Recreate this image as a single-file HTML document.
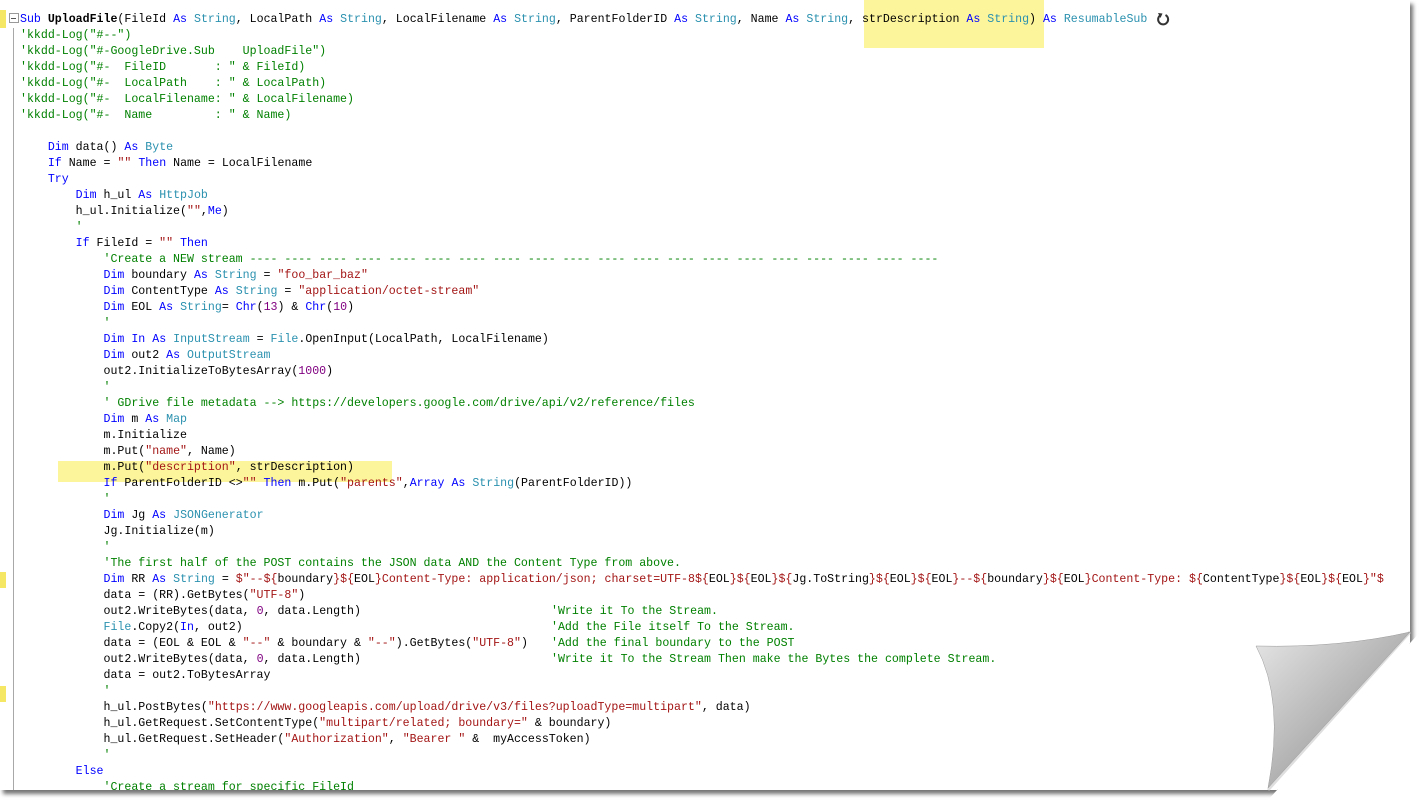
<!DOCTYPE html>
<html><head><meta charset="utf-8"><style>
html,body{margin:0;padding:0;background:#fff;width:1425px;height:803px;overflow:hidden}
#page{position:absolute;left:0;top:0;width:1410px;height:790px;background:#fff;box-shadow:3px 4px 4px rgba(0,0,0,.55);overflow:hidden;
clip-path:polygon(0 0,1420px 0,1420px 632px,1268px 800px,0 800px)}
#code{position:absolute;left:0;top:1px;width:1410px;height:800px}
.l{position:absolute;left:20px;height:16px;line-height:16px;white-space:pre;font-family:"Liberation Mono",monospace;font-size:11.6px;color:#000}
.k{color:#0000ff}.t{color:#2b91af}.c{color:#008000}.s{color:#a31515}.n{color:#800080}.b{font-weight:bold}
.cm{position:absolute;left:551px;color:#008000}
.hl{position:absolute;background:#fdf59c}
.mk{position:absolute;left:0;width:6px;background:#f5e663}
</style></head><body>
<div id="page">
<div class="hl" style="left:864px;top:0;width:180px;height:48px"></div>
<div class="hl" style="left:58px;top:461px;width:334px;height:21px"></div>
<div class="mk" style="top:10px;height:18px"></div>
<div class="mk" style="top:572px;height:16px"></div>
<div class="mk" style="top:686px;height:16px"></div>
<div style="position:absolute;left:13px;top:28px;width:1px;height:770px;background:#a8a8a8"></div>
<div style="position:absolute;left:9px;top:13px;width:8px;height:8px;border:1px solid #999;background:#fff"></div>
<div style="position:absolute;left:11px;top:18px;width:5px;height:1px;background:#555"></div>
<svg style="position:absolute;left:1156px;top:12px" width="14" height="14" viewBox="0 0 14 14"><path d="M4 3.5 A5 5 0 1 0 9.5 3" fill="none" stroke="#333" stroke-width="2"/><path d="M2 1 L6.5 1.5 L4.5 6 Z" fill="#333"/></svg>
<div id="code">
<div class="l" style="top:11px"><span class="k">Sub</span> <span class="b">UploadFile</span>(FileId <span class="k">As</span> <span class="t">String</span>, LocalPath <span class="k">As</span> <span class="t">String</span>, LocalFilename <span class="k">As</span> <span class="t">String</span>, ParentFolderID <span class="k">As</span> <span class="t">String</span>, Name <span class="k">As</span> <span class="t">String</span>, strDescription <span class="k">As</span> <span class="t">String</span>) <span class="k">As</span> <span class="t">ResumableSub</span></div>
<div class="l c" style="top:27px">'kkdd-Log("#--")</div>
<div class="l c" style="top:43px">'kkdd-Log("#-GoogleDrive.Sub    UploadFile")</div>
<div class="l c" style="top:59px">'kkdd-Log("#-  FileID       : " &amp; FileId)</div>
<div class="l c" style="top:75px">'kkdd-Log("#-  LocalPath    : " &amp; LocalPath)</div>
<div class="l c" style="top:91px">'kkdd-Log("#-  LocalFilename: " &amp; LocalFilename)</div>
<div class="l c" style="top:107px">'kkdd-Log("#-  Name         : " &amp; Name)</div>
<div class="l" style="top:139px">    <span class="k">Dim</span> data() <span class="k">As</span> <span class="t">Byte</span></div>
<div class="l" style="top:155px">    <span class="k">If</span> Name = <span class="s">""</span> <span class="k">Then</span> Name = LocalFilename</div>
<div class="l" style="top:171px">    <span class="k">Try</span></div>
<div class="l" style="top:187px">        <span class="k">Dim</span> h_ul <span class="k">As</span> <span class="t">HttpJob</span></div>
<div class="l" style="top:203px">        h_ul.Initialize(<span class="s">""</span>,<span class="k">Me</span>)</div>
<div class="l c" style="top:219px">        '</div>
<div class="l" style="top:235px">        <span class="k">If</span> FileId = <span class="s">""</span> <span class="k">Then</span></div>
<div class="l c" style="top:251px">            'Create a NEW stream ---- ---- ---- ---- ---- ---- ---- ---- ---- ---- ---- ---- ---- ---- ---- ---- ---- ---- ---- ----</div>
<div class="l" style="top:267px">            <span class="k">Dim</span> boundary <span class="k">As</span> <span class="t">String</span> = <span class="s">"foo_bar_baz"</span></div>
<div class="l" style="top:283px">            <span class="k">Dim</span> ContentType <span class="k">As</span> <span class="t">String</span> = <span class="s">"application/octet-stream"</span></div>
<div class="l" style="top:299px">            <span class="k">Dim</span> EOL <span class="k">As</span> <span class="t">String</span>= <span class="k">Chr</span>(<span class="n">13</span>) &amp; <span class="k">Chr</span>(<span class="n">10</span>)</div>
<div class="l c" style="top:315px">            '</div>
<div class="l" style="top:331px">            <span class="k">Dim</span> <span class="k">In</span> <span class="k">As</span> <span class="t">InputStream</span> = <span class="t">File</span>.OpenInput(LocalPath, LocalFilename)</div>
<div class="l" style="top:347px">            <span class="k">Dim</span> out2 <span class="k">As</span> <span class="t">OutputStream</span></div>
<div class="l" style="top:363px">            out2.InitializeToBytesArray(<span class="n">1000</span>)</div>
<div class="l c" style="top:379px">            '</div>
<div class="l c" style="top:395px">            ' GDrive file metadata --&gt; https://developers.google.com/drive/api/v2/reference/files</div>
<div class="l" style="top:411px">            <span class="k">Dim</span> m <span class="k">As</span> <span class="t">Map</span></div>
<div class="l" style="top:427px">            m.Initialize</div>
<div class="l" style="top:443px">            m.Put(<span class="s">"name"</span>, Name)</div>
<div class="l" style="top:459px">            m.Put(<span class="s">"description"</span>, strDescription)</div>
<div class="l" style="top:475px">            <span class="k">If</span> ParentFolderID &lt;&gt;<span class="s">""</span> <span class="k">Then</span> m.Put(<span class="s">"parents"</span>,<span class="k">Array</span> <span class="k">As</span> <span class="t">String</span>(ParentFolderID))</div>
<div class="l c" style="top:491px">            '</div>
<div class="l" style="top:507px">            <span class="k">Dim</span> Jg <span class="k">As</span> <span class="t">JSONGenerator</span></div>
<div class="l" style="top:523px">            Jg.Initialize(m)</div>
<div class="l c" style="top:539px">            '</div>
<div class="l c" style="top:555px">            'The first half of the POST contains the JSON data AND the Content Type from above.</div>
<div class="l" style="top:571px">            <span class="k">Dim</span> RR <span class="k">As</span> <span class="t">String</span> = <span class="s">$"--${</span>boundary<span class="s">}${</span>EOL<span class="s">}Content-Type: application/json; charset=UTF-8${</span>EOL<span class="s">}${</span>EOL<span class="s">}${</span>Jg.ToString<span class="s">}${</span>EOL<span class="s">}${</span>EOL<span class="s">}--${</span>boundary<span class="s">}${</span>EOL<span class="s">}Content-Type: ${</span>ContentType<span class="s">}${</span>EOL<span class="s">}${</span>EOL<span class="s">}"$</span></div>
<div class="l" style="top:587px">            data = (RR).GetBytes(<span class="s">"UTF-8"</span>)</div>
<div class="l" style="top:603px;width:1300px">            out2.WriteBytes(data, <span class="n">0</span>, data.Length)<span class="cm" style="left:531px">'Write it To the Stream.</span></div>
<div class="l" style="top:619px;width:1300px">            <span class="t">File</span>.Copy2(<span class="k">In</span>, out2)<span class="cm" style="left:531px">'Add the File itself To the Stream.</span></div>
<div class="l" style="top:635px;width:1300px">            data = (EOL &amp; EOL &amp; <span class="s">"--"</span> &amp; boundary &amp; <span class="s">"--"</span>).GetBytes(<span class="s">"UTF-8"</span>)<span class="cm" style="left:531px">'Add the final boundary to the POST</span></div>
<div class="l" style="top:651px;width:1300px">            out2.WriteBytes(data, <span class="n">0</span>, data.Length)<span class="cm" style="left:531px">'Write it To the Stream Then make the Bytes the complete Stream.</span></div>
<div class="l" style="top:667px">            data = out2.ToBytesArray</div>
<div class="l c" style="top:683px">            '</div>
<div class="l" style="top:699px">            h_ul.PostBytes(<span class="s">"https://www.googleapis.com/upload/drive/v3/files?uploadType=multipart"</span>, data)</div>
<div class="l" style="top:715px">            h_ul.GetRequest.SetContentType(<span class="s">"multipart/related; boundary="</span> &amp; boundary)</div>
<div class="l" style="top:731px">            h_ul.GetRequest.SetHeader(<span class="s">"Authorization"</span>, <span class="s">"Bearer "</span> &amp;  myAccessToken)</div>
<div class="l c" style="top:747px">            '</div>
<div class="l" style="top:763px">        <span class="k">Else</span></div>
<div class="l c" style="top:779px">            'Create a stream for specific FileId</div>
</div>
</div>
<svg style="position:absolute;left:0;top:0" width="1425" height="803">
<defs><linearGradient id="g" x1="0" y1="0" x2="1" y2="1"><stop offset="0" stop-color="#e6e6e6"/><stop offset="0.55" stop-color="#b0b0b0"/><stop offset="1" stop-color="#666"/></linearGradient></defs>
<path d="M1410 632 L1268 790" stroke="#c8c8c8" stroke-width="3" fill="none" opacity=".6"/>
<path d="M1256 646 Q1340 648 1410 632 L1268 788 Q1285 700 1256 646 Z" fill="url(#g)" stroke="#999" stroke-width="0.5"/>
</svg>
</body></html>
